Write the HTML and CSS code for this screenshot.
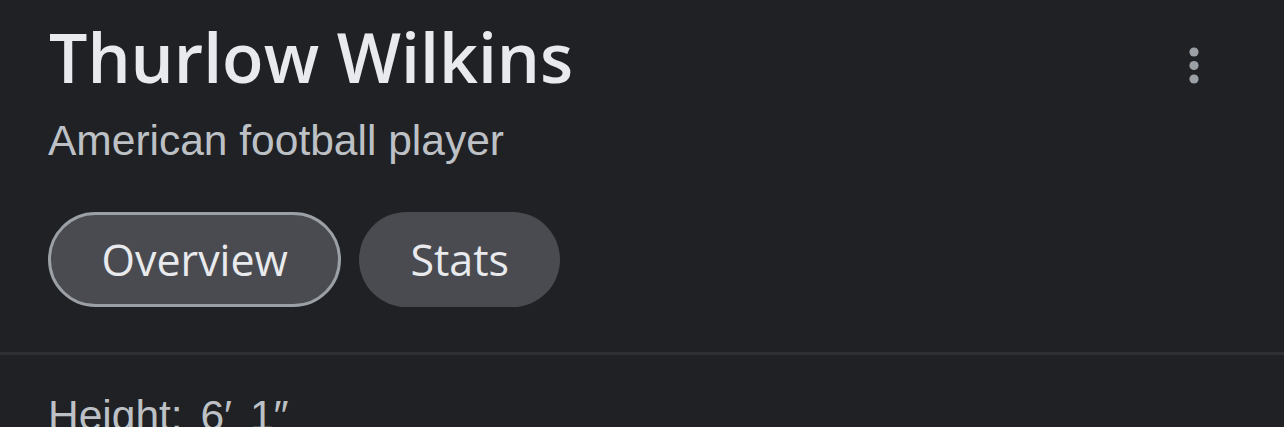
FILE: index.html
```html
<!DOCTYPE html>
<html>
<head>
<meta charset="utf-8">
<link rel="stylesheet" href="styles.css">
</head>
<body>
<div class="card">
  <div class="header">
    <div class="titles">
      <h1 class="title">Thurlow Wilkins</h1>
      <div class="subtitle">American football player</div>
    </div>
    <button class="more" aria-label="More">
      <svg width="12" height="40" viewBox="0 0 12 40"><circle cx="6" cy="6" r="4.6" fill="#9aa0a6"/><circle cx="6" cy="19.5" r="4.6" fill="#9aa0a6"/><circle cx="6" cy="33" r="4.6" fill="#9aa0a6"/></svg>
    </button>
  </div>
  <div class="chips">
    <div class="chip active">Overview</div>
    <div class="chip">Stats</div>
  </div>
  <div class="divider"></div>
  <div class="facts">
    <div class="fact">Height: 6′ 1″</div>
  </div>
</div>
</body>
</html>
```
FILE: styles.css
```css
html, body {
  margin: 0;
  padding: 0;
  background: #202124;
  overflow: hidden;
}
.card {
  width: 1284px;
  height: 427px;
  background: #202124;
  font-family: "Open Sans", "Liberation Sans", sans-serif;
}
.header {
  display: flex;
  justify-content: space-between;
  align-items: flex-start;
  padding: 0 84px 0 49px;
}
.titles {
  display: flex;
  flex-direction: column;
}
.title {
  margin: 0;
  padding-top: 12px;
  font-family: "Open Sans", sans-serif;
  font-weight: 600;
  font-size: 68px;
  line-height: 90px;
  color: #e8eaed;
}
.subtitle {
  margin-left: -1px;
  font-family: "Liberation Sans", Arial, sans-serif;
  font-size: 42.5px;
  line-height: 50px;
  color: #bdc1c6;
  margin-top: 14px;
}
.more {
  background: none;
  border: none;
  padding: 0;
  margin-top: 46px;
  display: flex;
}
.chips {
  display: flex;
  gap: 18px;
  padding: 46px 48px 0;
}
.chip {
  height: 95px;
  box-sizing: border-box;
  border-radius: 48px;
  background: #4a4b50;
  color: #e8eaed;
  font-family: "Open Sans", sans-serif;
  font-weight: 500;
  font-size: 43px;
  display: flex;
  align-items: center;
  padding: 0 51px;
}
.chip.active {
  border: 3px solid #9aa0a6;
  padding: 0 50.5px;
}
.divider {
  height: 3px;
  background: #2f3034;
  margin-top: 45px;
}
.facts {
  padding: 36px 48px 0;
}
.fact {
  font-family: "Liberation Sans", Arial, sans-serif;
  font-size: 42.5px;
  color: #bdc1c6;
  line-height: 50px;
  word-spacing: 6px;
}
```
